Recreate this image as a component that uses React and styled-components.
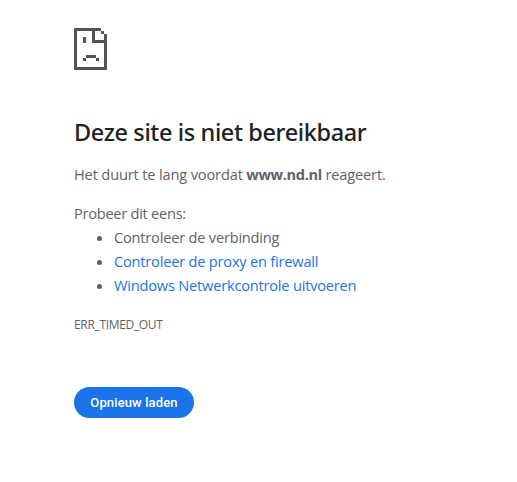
import React from 'react';
import styled, { createGlobalStyle } from 'styled-components';

const GlobalStyle = createGlobalStyle`
  body {
    margin: 0;
    background: #fff;
    color: #5f6368;
    font-family: 'Open Sans', 'Noto Sans', sans-serif;
    font-size: 14.6px;
    line-height: 24px;
  }
`;

const ErrorPage = styled.main`
  padding: 28px 0 0 74px;
  width: 420px;
`;

const SadPage = styled.svg`
  display: block;
  width: 33px;
  height: 42px;
  fill: #535353;
`;

const Title = styled.h1`
  margin: 47px 0 0;
  color: #202124;
  font-family: 'Noto Sans', 'Open Sans', sans-serif;
  font-size: 23.5px;
  font-weight: 500;
  line-height: 30px;
  letter-spacing: -0.38px;
  white-space: nowrap;
`;

const Text = styled.p`
  margin: 15px 0 0;
  letter-spacing: ${props => props.$spacing || 0}px;
  white-space: nowrap;

  strong {
    font-weight: 700;
    letter-spacing: -0.36px;
  }
`;

const Suggestions = styled.ul`
  margin: 0;
  padding: 0 0 0 40px;
`;

const Suggestion = styled.li`
  letter-spacing: -0.2px;
  white-space: nowrap;
`;

const SuggestionLink = styled.a`
  color: #1a73e8;
  text-decoration: none;
`;

const ErrorCode = styled.div`
  margin-top: 16px;
  font-size: 12px;
  line-height: 24px;
  letter-spacing: -0.33px;
`;

const ReloadButton = styled.button`
  display: block;
  width: 120px;
  height: 31px;
  margin-top: 50px;
  padding: 0;
  border: 0;
  border-radius: 16px;
  background: #1a73e8;
  color: #fff;
  font: 500 13px 'Roboto', sans-serif;
  letter-spacing: 0.12px;
  cursor: pointer;
`;

const App = () => {
  return (
    <>
      <GlobalStyle />
      <ErrorPage>
        <SadPage viewBox="0 0 33 42" shapeRendering="crispEdges" aria-hidden="true">
          <path d="M0 0h27v3h3v3h3v36H0zM3 3v36h27V15H18V3zM21 3v9h9V6h-3V3z" fillRule="evenodd" />
          <path d="M9 9h3v6H9zM12 27h10v3H12zM9 30h3v3H9zM22 30h3v3h-3z" />
        </SadPage>
        <Title>Deze site is niet bereikbaar</Title>
        <Text $spacing={-0.15}>
          Het duurt te lang voordat <strong>www.nd.nl</strong> reageert.
        </Text>
        <Text $spacing={-0.26}>Probeer dit eens:</Text>
        <Suggestions>
          <Suggestion>Controleer de verbinding</Suggestion>
          <Suggestion>
            <SuggestionLink href="#">Controleer de proxy en firewall</SuggestionLink>
          </Suggestion>
          <Suggestion>
            <SuggestionLink href="#">Windows Netwerkcontrole uitvoeren</SuggestionLink>
          </Suggestion>
        </Suggestions>
        <ErrorCode>ERR_TIMED_OUT</ErrorCode>
        <ReloadButton type="button">Opnieuw laden</ReloadButton>
      </ErrorPage>
    </>
  );
};

export default App;
